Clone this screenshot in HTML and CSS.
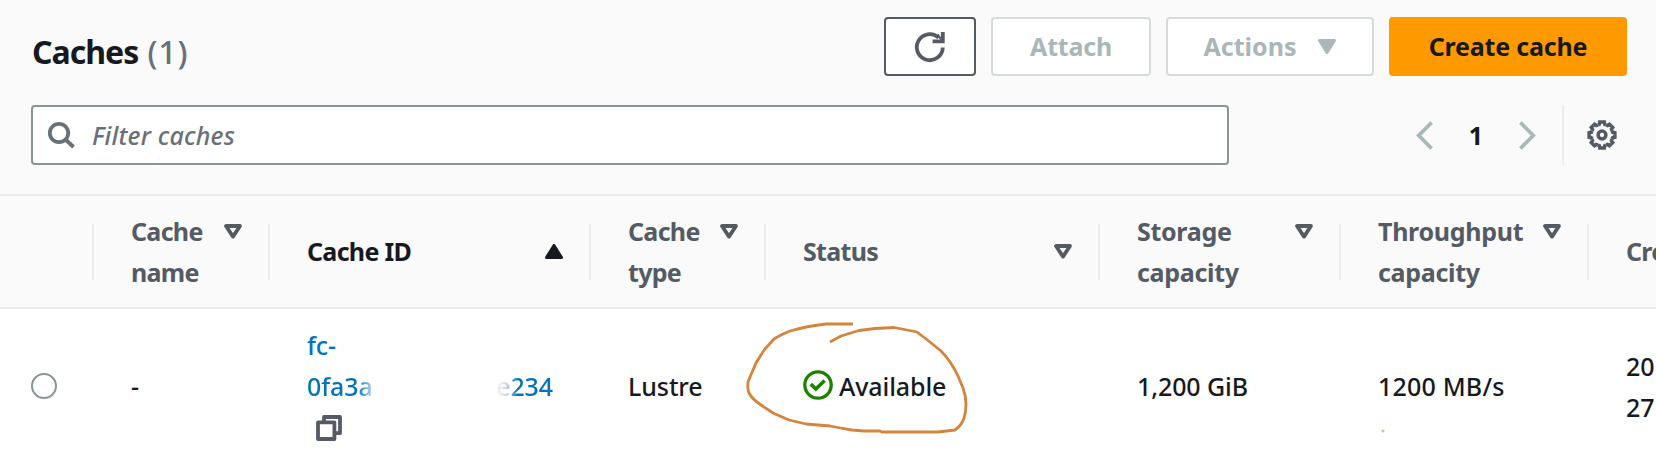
FILE: index.html
```html
<!DOCTYPE html>
<html lang="en">
<head>
<meta charset="utf-8">
<title>Caches</title>
<link rel="stylesheet" href="styles.css">
</head>
<body>
<svg class="defs" width="0" height="0">
  <symbol id="sort" viewBox="0 0 18 15"><path d="M2 2h14L9 12.6z" fill="none" stroke="currentColor" stroke-width="3.8" stroke-linejoin="round"/></symbol>
  <symbol id="caret" viewBox="0 0 18 15"><path d="M1.5 1.5h15L9 13.5z" fill="currentColor" stroke="currentColor" stroke-width="3" stroke-linejoin="round"/></symbol>
  <defs><path id="tooth" d="M-4.1-9.9L-2.7-10.7-2.3-12.9H2.3L2.7-10.7 4.1-9.9"/></defs>
</svg>
<div class="panel">
  <header class="top">
    <h2 class="title"><span class="title-name">Caches</span> <span class="count">(1)</span></h2>
    <div class="actions">
      <button class="btn btn-refresh" aria-label="Refresh">
        <svg width="32" height="32" viewBox="0 0 32 32" fill="none" stroke="currentColor" stroke-width="3.8"><path d="M28.8 16.5A13 13 0 1 1 24.6 6.6"/><path d="M28.8 1v9.4H18.6"/><path d="M22.5 4.8l6 6v-2l-4-6z" fill="currentColor" stroke="none"/></svg>
      </button>
      <button class="btn btn-attach">Attach</button>
      <button class="btn btn-actions"><span>Actions</span><svg width="18" height="15"><use href="#caret"/></svg></button>
      <button class="btn btn-primary">Create cache</button>
    </div>
  </header>
  <div class="tools">
    <label class="search">
      <svg width="29" height="29" viewBox="0 0 29 29" fill="none" stroke="currentColor" stroke-width="3.8"><circle cx="12" cy="12" r="9.2"/><path d="M18.5 18.5l8 7.5"/></svg>
      <span class="placeholder">Filter caches</span>
    </label>
    <nav class="pager">
      <svg width="17" height="29" viewBox="0 0 17 29" fill="none" stroke="currentColor" stroke-width="3.8"><path d="M15.6 1.5L2.8 14.5l12.8 13"/></svg>
      <span class="page">1</span>
      <svg width="17" height="29" viewBox="0 0 17 29" fill="none" stroke="currentColor" stroke-width="3.8"><path d="M1.4 1.5l12.8 13-12.8 13"/></svg>
    </nav>
    <div class="settings">
      <svg width="30" height="30" viewBox="-15 -15 30 30" fill="none" stroke="currentColor" stroke-width="3.5"><use href="#tooth"/><use href="#tooth" transform="rotate(45)"/><use href="#tooth" transform="rotate(90)"/><use href="#tooth" transform="rotate(135)"/><use href="#tooth" transform="rotate(180)"/><use href="#tooth" transform="rotate(225)"/><use href="#tooth" transform="rotate(270)"/><use href="#tooth" transform="rotate(315)"/><circle r="3.9"/></svg>
    </div>
  </div>
  <div class="row head">
    <div class="cell"></div>
    <div class="cell two"><span>Cache<br>name</span><svg width="18" height="15"><use href="#sort"/></svg></div>
    <div class="cell sorted"><span>Cache ID</span><svg class="up" width="18" height="15"><use href="#caret"/></svg></div>
    <div class="cell two"><span>Cache<br>type</span><svg width="18" height="15"><use href="#sort"/></svg></div>
    <div class="cell"><span>Status</span><svg width="18" height="15"><use href="#sort"/></svg></div>
    <div class="cell two wide"><span>Storage<br>capacity</span><svg width="18" height="15"><use href="#sort"/></svg></div>
    <div class="cell two wide"><span>Throughput<br>capacity</span><svg width="18" height="15"><use href="#sort"/></svg></div>
    <div class="cell"><span>Cre</span></div>
  </div>
  <div class="row body">
    <div class="cell pick"><span class="radio"></span></div>
    <div class="cell">-</div>
    <div class="cell id">
      <a class="link">fc-</a>
      <a class="link split"><span class="fade-right">0fa3a</span><span class="fade-left">e234</span></a>
      <span class="copy"><svg width="26" height="26" viewBox="0 0 26 26" fill="none" stroke="currentColor" stroke-width="3.8" stroke-linejoin="round"><path d="M2 7.4h16.4V24H2z"/><path d="M8 7V2h16v16.2h-5"/></svg></span>
    </div>
    <div class="cell">Lustre</div>
    <div class="cell status"><svg width="30" height="30" viewBox="0 0 30 30" fill="none" stroke="currentColor"><circle cx="15" cy="15" r="13.2" stroke-width="3.3"/><path d="M7.7 14.2l5.2 4.8 8.7-8.500" stroke-width="3.7"/></svg><span>Available</span></div>
    <div class="cell">1,200 GiB</div>
    <div class="cell rate">1200 MB/s</div>
    <div class="cell">20<br>27</div>
  </div>
  <svg class="ink" width="1656" height="460" viewBox="0 0 1656 460" fill="none" stroke="#d5843c" stroke-width="2.8" stroke-linejoin="round">
    <path d="M853 324H826Q807 326 790 331Q780 335 774 339L765 349Q760 356 756 363L750 377Q746 384 749 393Q752 399 761 405L773 413L789 420L806 424L830 426Q840 428 852 430L864 431H880L882 432H938L955 430Q962 425 964 418Q966 412 966 404Q966 396 963 388L958 376Q951 361 941 351L930 342L917 332L907 330L894 327.500L875 328.500L859 330.500L841 336L830 342"/>
    <circle cx="1383" cy="431" r="1.5" fill="#e8b393" stroke="none"/>
  </svg>
</div>
</body>
</html>
```
FILE: styles.css
```css
* { box-sizing: border-box; }
body {
  margin: 0;
  background: #fff;
  color: #16191f;
  font: 500 25px/41px "Noto Sans", "Open Sans", sans-serif;
}
.defs { display: block; height: 0; }
.panel { position: relative; width: 1656px; height: 460px; overflow: hidden; }
.top {
  display: flex;
  justify-content: space-between;
  height: 105px;
  padding: 17px 29px 0 32px;
  background: #fafafa;
}
.title { margin: 14px 0 0; font-size: 32px; line-height: 42px; font-weight: 700; letter-spacing: -1px; }
.count { margin-left: 2px; font-weight: 500; color: #687078; letter-spacing: .8px; }
.actions { display: flex; gap: 15px; }
.btn {
  display: flex;
  align-items: center;
  justify-content: center;
  height: 59px;
  padding: 0;
  border: 2px solid #d5dbdb;
  border-radius: 4px;
  background: #fff;
  color: #aab7b8;
  font: 700 25px/41px "Noto Sans", "Open Sans", sans-serif;
  letter-spacing: -.2px;
}
.btn-refresh { width: 92px; border-color: #545b64; color: #545b64; }
.btn-attach { width: 160px; }
.btn-actions { width: 208px; gap: 22px; letter-spacing: 0; }
.btn-primary { width: 238px; border-color: #ff9900; background: #ff9900; color: #16191f; }
.tools { display: flex; height: 89px; padding-left: 31px; background: #fafafa; }
.search {
  display: flex;
  align-items: center;
  gap: 16px;
  width: 1198px;
  height: 60px;
  padding: 1px 0 0 14px;
  border: 2px solid #879596;
  border-radius: 4px;
  background: #fff;
  color: #687078;
}
.placeholder { font-style: italic; letter-spacing: .2px; }
.pager { display: flex; align-items: center; justify-content: space-between; width: 120px; height: 60px; margin-left: 187px; color: #aab7b8; }
.page { color: #16191f; font-weight: 700; }
.settings { height: 60px; margin-left: 26px; padding: 15px 0 0 23px; border-left: 2px solid #eaeded; color: #545b64; line-height: 0; }
.row { display: grid; grid-template-columns: 94px 176px 321px 175px 334px 241px 248px 240px; }
.head {
  height: 115px;
  border-top: 2px solid #eaeded;
  border-bottom: 2px solid #eaeded;
  background: #fafafa;
  color: #545b64;
  font-weight: 700;
  letter-spacing: -.7px;
}
.cell { display: flex; align-items: center; padding-left: 37px; }
.head .cell {
  justify-content: space-between;
  padding-right: 28px;
  background: linear-gradient(#eaeded, #eaeded) right center / 2px 56px no-repeat;
}
.head .wide { letter-spacing: -.3px; }
.two svg { margin-bottom: 41px; }
.sorted { color: #16191f; }
.up { transform: rotate(180deg); }
.body { height: 152px; letter-spacing: -.1px; }
.body .rate { letter-spacing: .2px; }
.body .cell { padding-top: 3px; }
.body .pick { padding: 2px 0 0 31px; }
.radio { width: 26px; height: 26px; border: 2px solid #879596; border-radius: 50%; }
.body .id { flex-direction: column; align-items: flex-start; justify-content: center; }
.link { color: #0073bb; }
.split { display: flex; justify-content: space-between; width: 246px; }
.fade-right { color: transparent; background: linear-gradient(90deg, #0073bb 50px, #dde6f3 68px); background-clip: text; }
.fade-left { color: transparent; background: linear-gradient(90deg, #e8eff8 5px, #b9cdea 12px, #0073bb 22px); background-clip: text; }
.copy { display: flex; align-items: center; height: 41px; padding-left: 9px; color: #545b64; }
.status { gap: 6px; }
.status svg { color: #1d8102; margin-top: -4px; }
.ink { position: absolute; left: 0; top: 0; }
```
